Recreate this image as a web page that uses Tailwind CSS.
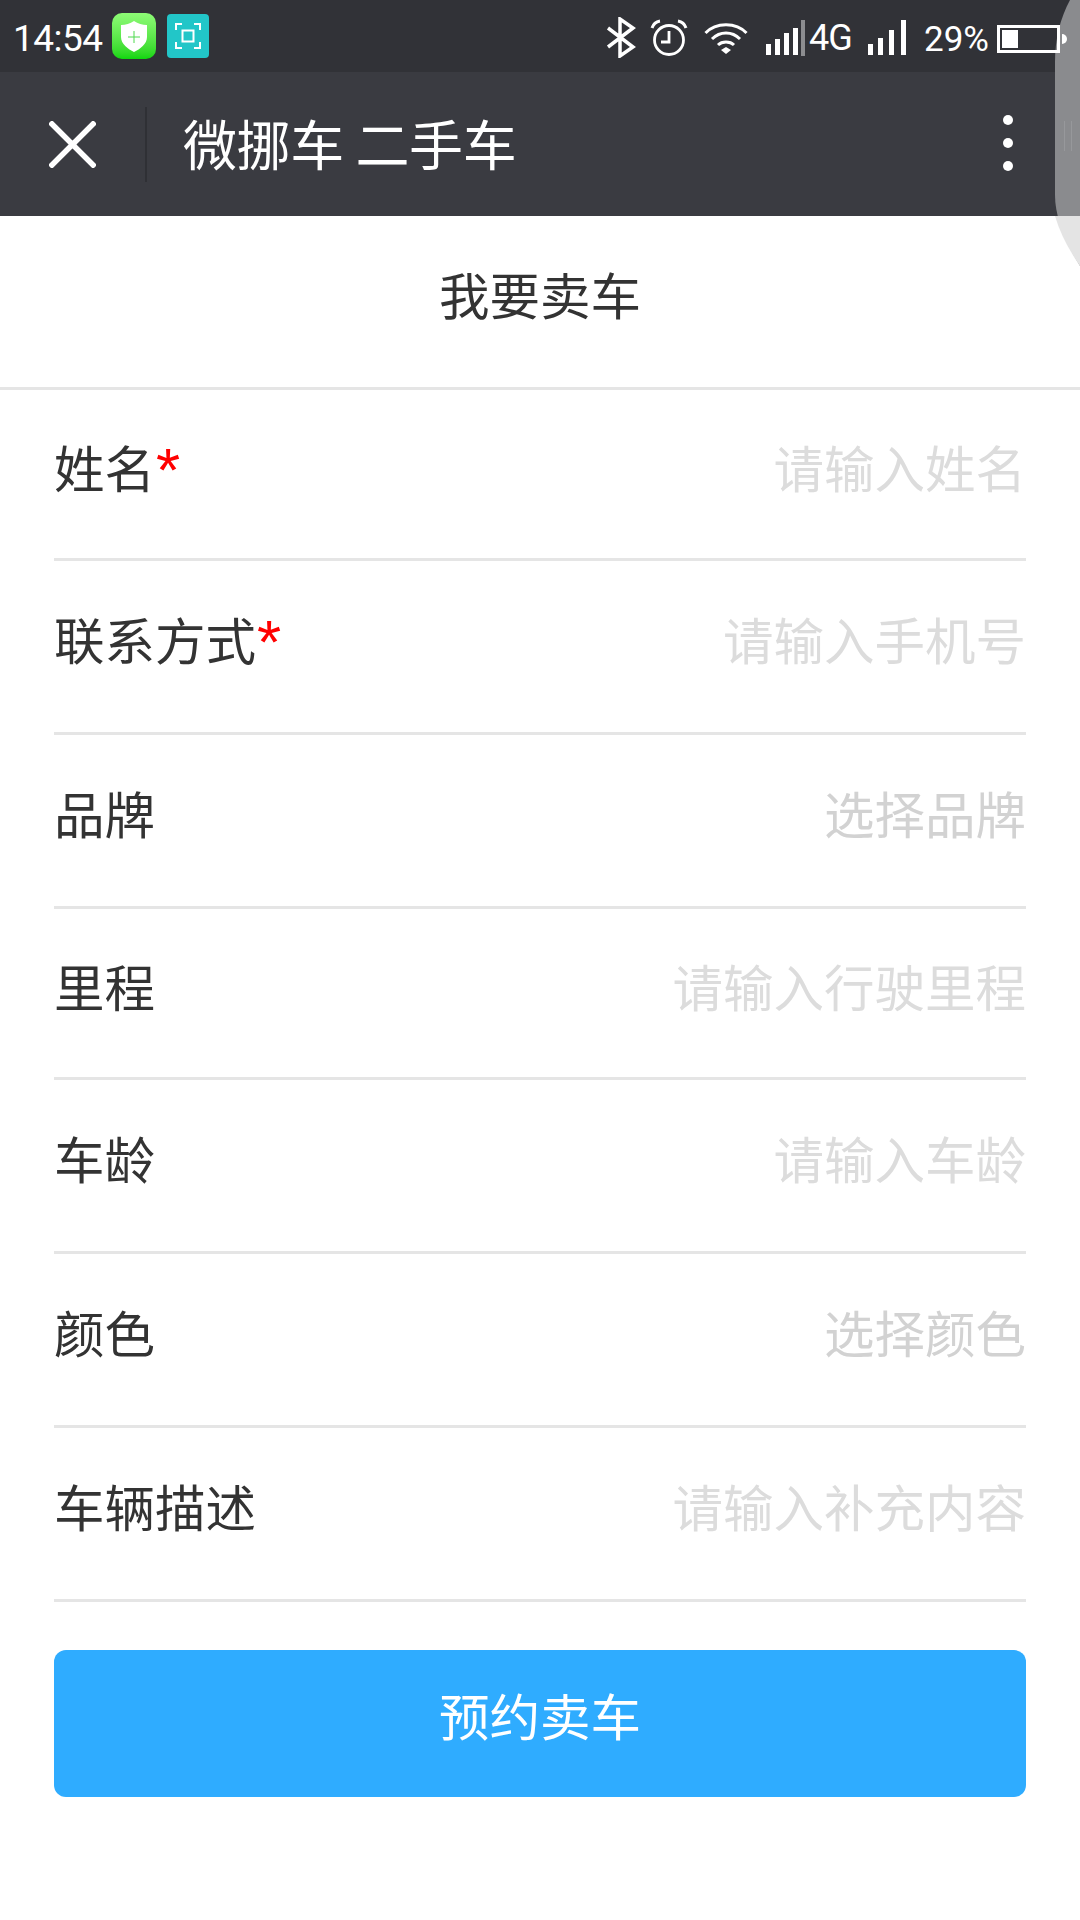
<!DOCTYPE html>
<html lang="zh-CN">
<head>
<meta charset="utf-8">
<script src="https://cdn.jsdelivr.net/npm/@tailwindcss/browser@4"></script>
</head>
<body class="m-0 bg-white">
<div class="relative w-[1080px] h-[1920px] overflow-hidden bg-white font-['Noto_Sans_CJK_SC','Noto_Sans',sans-serif] font-normal">
  <!-- status bar -->
  <div class="h-[72px] bg-[#313237] flex items-center text-white font-['Roboto',sans-serif] font-normal">
    <span class="ml-[13px] text-[37px] leading-none mt-[4px] tracking-[-0.5px] w-[99px]">14:54</span>
    <div class="w-[44px] h-[46px] rounded-[10px] bg-gradient-to-b from-[#8dfb75] to-[#0bd60b] flex items-center justify-center">
      <svg width="28" height="33" viewBox="0 0 28 33"><path d="M1 5Q8 5 14 1Q20 5 27 5V17C27 24 20 29 14 32C8 29 1 24 1 17Z" fill="#fff"/><path d="M14 11V23M8 17H20" stroke="#4ed94e" stroke-width="1"/></svg>
    </div>
    <div class="ml-[11px] w-[42px] h-[44px] rounded-[4px] bg-[#22c6c8] flex items-center justify-center">
      <svg width="26" height="26" viewBox="0 0 26 26" fill="none" stroke="#fff" stroke-width="2"><path d="M1 7V1H7M19 1H25V7M25 19V25H19M7 25H1V19"/><rect x="7.500" y="7.500" width="11" height="11"/></svg>
    </div>
    <svg class="absolute left-[606px] top-[17px]" width="30" height="41" viewBox="0 0 30 41" fill="none" stroke="#fff" stroke-width="3.500"><path d="M2 11L27 30L14 39V2L27 11L2 30"/></svg>
    <svg class="absolute left-[650px] top-[19px]" width="38" height="38" viewBox="0 0 38 38" fill="none" stroke="#fff" stroke-width="2.800"><circle cx="19" cy="21" r="14.500"/><path d="M19 12V23H11"/><path d="M2 9Q4 3 10 2M28 2Q34 3 36 9" stroke-width="3"/></svg>
    <svg class="absolute left-[704px] top-[21px]" width="44" height="34" viewBox="0 0 44 34" fill="none" stroke="#fff" stroke-width="3"><path d="M1.500 12C12 1 32 1 42.500 12M8 18C16 10 28 10 36 18M14 24C18 20 26 20 30 24"/><path d="M17 29L22 26L27 29L22 33Z" fill="#fff" stroke="none"/></svg>
    <svg class="absolute left-[766px] top-[19px]" width="32" height="37" viewBox="0 0 32 37" fill="#fff"><rect x="0" y="25" width="5" height="11"/><rect x="9" y="20" width="5" height="16"/><rect x="18" y="14" width="5" height="22"/><rect x="27" y="9" width="5" height="27"/></svg>
    <div class="absolute left-[801px] top-[20px] w-[4px] h-[36px] bg-[#8c8d90]"></div>
    <span class="absolute left-[809px] top-[20px] text-[36px] leading-[36px] tracking-[-1px]">4G</span>
    <svg class="absolute left-[868px] top-[19px]" width="40" height="37" viewBox="0 0 40 37" fill="#fff"><rect x="0" y="25" width="5" height="11"/><rect x="10" y="19" width="5" height="17"/><rect x="21" y="11" width="5" height="25"/><rect x="33" y="1" width="5" height="35"/></svg>
    <span class="absolute left-[924px] top-[22px] text-[35px] leading-[36px]">29%</span>
  </div>
  <!-- nav -->
  <div class="h-[144px] bg-[#3a3b41] flex items-center text-white">
    <svg class="ml-[49px]" width="47" height="47" viewBox="0 0 47 47" stroke="#fff" stroke-width="5.500"><path d="M1 1L46 46M46 1L1 46"/></svg>
    <div class="ml-[49px] w-[2px] h-[75px] bg-[#2f3035]"></div>
    <span class="ml-[36px] mb-[2px] text-[54px] leading-none tracking-[-0.4px]">微挪车 二手车</span>
    <div class="absolute left-[1003px] top-[115px] flex flex-col gap-[13px]">
      <div class="w-[10px] h-[10px] rounded-full bg-white"></div>
      <div class="w-[10px] h-[10px] rounded-full bg-white"></div>
      <div class="w-[10px] h-[10px] rounded-full bg-white"></div>
    </div>
  </div>
  <!-- floating handle -->
  <svg class="absolute left-[1050px] top-0" width="30" height="270" viewBox="0 0 30 270"><path d="M20 0Q5 28 5 62V195Q5 225 30 266V0Z" fill="#8a8b8e"/><path d="M5 216Q12 240 30 266V216Z" fill="#e4e4e4"/><rect x="14" y="121" width="1" height="30" fill="#97989b"/><rect x="21" y="121" width="1" height="30" fill="#97989b"/></svg>
  <!-- battery, over the handle -->
  <div class="absolute left-[997px] top-[25px] w-[63px] h-[28px] border-[3px] border-white p-[2px]"><div class="w-[16px] h-full bg-white"></div></div>
  <div class="absolute left-[1062px] top-[34px] w-[5px] h-[10px] rounded-r-full bg-white"></div>

  <!-- heading -->
  <div class="h-[174px] border-b-[3px] border-[#e5e5e5] flex items-center justify-center text-[50.500px] leading-none text-[#333] pb-[17px]">我要卖车</div>

  <!-- form -->
  <div class="px-[54px] text-[50.500px] leading-none">
    <div class="h-[171px] border-b-[3px] border-[#e5e5e5] flex items-center justify-between pb-[16px]"><span class="text-[#333]">姓名<span class="relative top-[3px] ml-[1px] text-[#ff0000] text-[62px] leading-[0] font-['Liberation_Sans']">*</span></span><span class="text-[#dcdcdc]">请输入姓名</span></div>
    <div class="h-[174px] border-b-[3px] border-[#e5e5e5] flex items-center justify-between pb-[16px]"><span class="text-[#333]">联系方式<span class="relative top-[3px] ml-[1px] text-[#ff0000] text-[62px] leading-[0] font-['Liberation_Sans']">*</span></span><span class="text-[#dcdcdc]">请输入手机号</span></div>
    <div class="h-[174px] border-b-[3px] border-[#e5e5e5] flex items-center justify-between pb-[17px]"><span class="text-[#333]">品牌</span><span class="text-[#d2d2d2]">选择品牌</span></div>
    <div class="h-[171px] border-b-[3px] border-[#e5e5e5] flex items-center justify-between pb-[16px]"><span class="text-[#333]">里程</span><span class="text-[#dcdcdc]">请输入行驶里程</span></div>
    <div class="h-[174px] border-b-[3px] border-[#e5e5e5] flex items-center justify-between pb-[17px]"><span class="text-[#333]">车龄</span><span class="text-[#dcdcdc]">请输入车龄</span></div>
    <div class="h-[174px] border-b-[3px] border-[#e5e5e5] flex items-center justify-between pb-[17px]"><span class="text-[#333]">颜色</span><span class="text-[#d2d2d2]">选择颜色</span></div>
    <div class="h-[174px] border-b-[3px] border-[#e5e5e5] flex items-center justify-between pb-[17px]"><span class="text-[#333]">车辆描述</span><span class="text-[#dcdcdc]">请输入补充内容</span></div>
    <div class="mt-[48px] h-[147px] rounded-[12px] bg-[#2facff] text-white flex items-center justify-center pb-[18px]">预约卖车</div>
  </div>
</div>
</body>
</html>
